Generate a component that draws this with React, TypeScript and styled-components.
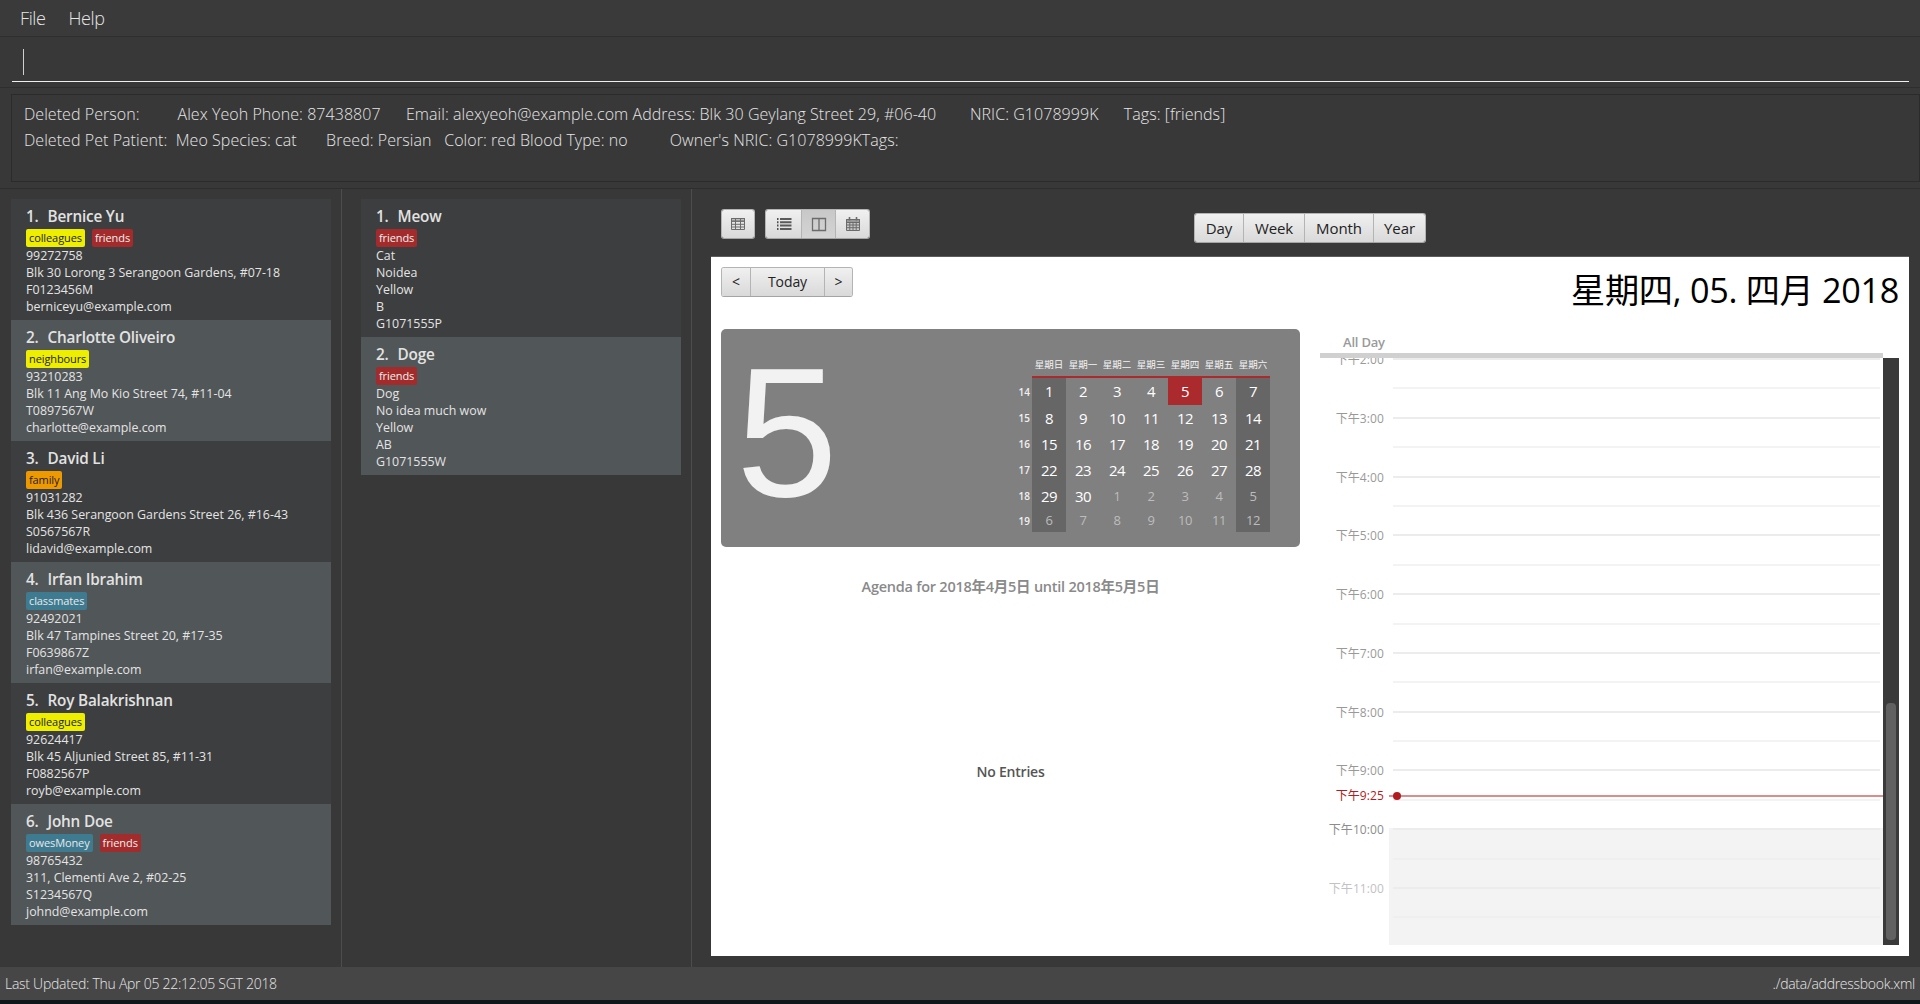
import React from "react";
import styled, { createGlobalStyle } from "styled-components";

const sans = `"Open Sans", "Noto Sans CJK SC", sans-serif`;

const GlobalStyle = createGlobalStyle`
  html, body { margin: 0; padding: 0; height: 100%; background: #383838; }
  #root { height: 100%; }
  * { box-sizing: border-box; }
`;

const Page = styled.div`
  height: 1004px;
  display: flex;
  flex-direction: column;
  overflow: hidden;
  background: #383838;
  font-family: ${sans};
  color: #e6e6e6;
`;

const MenuBar = styled.div`
  height: 36px;
  flex: none;
  display: flex;
  align-items: center;
  gap: 23px;
  padding: 0 0 1px 20px;
  background: #3a3a3a;
  font-size: 18px;
  font-weight: 300;
  letter-spacing: -0.4px;
`;

const CommandBox = styled.div`
  height: 52px;
  flex: none;
  padding: 12px 11px 0 12px;
  border-top: 1px solid #2e2e2e;
  border-bottom: 1px solid #2e2e2e;
`;

const CommandInput = styled.div`
  height: 33px;
  padding: 0 0 6px 11px;
  border-bottom: 1px solid #f0f0f0;
`;

const Caret = styled.div`
  width: 1px;
  height: 26px;
  background: #d0d0d0;
`;

const ResultOuter = styled.div`
  height: 101px;
  flex: none;
  padding: 6px 0 6px 11px;
  border-bottom: 1px solid #2e2e2e;
`;

const ResultBox = styled.div`
  height: 100%;
  padding: 6px 12px;
  border: 1px solid #2b2b2b;
  font-size: 16px;
  font-weight: 300;
  letter-spacing: 0.055px;
  line-height: 26px;
  white-space: pre;
`;

const Main = styled.div`
  flex: 1;
  min-height: 0;
  display: flex;
`;

const ListColumn = styled.div<{ $width: number; $left: number }>`
  width: ${(p) => p.$width}px;
  flex: none;
  padding: 10px 10px 0 ${(p) => p.$left}px;
  border-right: 1px solid #4d4d4d;
`;

const Card = styled.div<{ $even: boolean }>`
  padding: 8px 0 5px 15px;
  background: ${(p) => (p.$even ? "#515658" : "#3c3e3f")};
  color: #e4e4e4;
  font-size: 12.4px;
`;

const CardName = styled.div`
  height: 22px;
  display: flex;
  gap: 9px;
  font-size: 15.3px;
  line-height: 18px;
  font-weight: 600;
  letter-spacing: -0.2px;
  color: #e2e2e2;
`;

const TagRow = styled.div`
  display: flex;
  gap: 7px;
  height: 18px;
`;

const Tag = styled.span<{ $bg: string; $fg: string }>`
  height: 18px;
  padding: 0 3px;
  border-radius: 2px;
  font-size: 11px;
  letter-spacing: -0.1px;
  line-height: 18px;
  background: ${(p) => p.$bg};
  color: ${(p) => p.$fg};
`;

const CardLine = styled.div`
  height: 17px;
  line-height: 17px;
`;

const CalendarColumn = styled.div`
  flex: 1;
  min-width: 0;
  display: flex;
  flex-direction: column;
  padding: 0 11px 11px 19px;
`;

const Toolbar = styled.div`
  height: 67px;
  flex: none;
  display: grid;
  grid-template-columns: 1fr auto 1fr;
  padding-top: 20px;
`;

const ToolLeft = styled.div`
  display: flex;
  gap: 10px;
  align-items: flex-start;
  padding-left: 10px;
`;

const ButtonGroup = styled.div<{ $top?: number }>`
  display: flex;
  height: 30px;
  margin-top: ${(p) => p.$top ?? 0}px;
  border: 1px solid #b4b4b4;
  border-bottom-color: #a4a4a4;
  border-radius: 3px;
  overflow: hidden;
`;

const GroupButton = styled.div<{ $w: number; $pressed?: boolean; $size?: number }>`
  width: ${(p) => p.$w}px;
  display: flex;
  align-items: center;
  justify-content: center;
  padding-bottom: 1px;
  font-size: ${(p) => p.$size ?? 14}px;
  color: #222;
  letter-spacing: -0.1px;
  background: ${(p) =>
    p.$pressed
      ? "linear-gradient(#c8c8c8, #d4d4d4)"
      : "linear-gradient(#f0f0f0, #d9d9d9)"};
  & + & {
    border-left: 1px solid #b4b4b4;
  }
`;

const Sheet = styled.div`
  flex: 1;
  min-height: 0;
  display: flex;
  flex-direction: column;
  padding: 10px;
  background: #fff;
  border-top: 1px solid #5c5c5c;
  color: #000;
`;

const SheetHead = styled.div`
  height: 62px;
  flex: none;
  display: flex;
  justify-content: space-between;
  align-items: flex-start;
`;

const DateTitle = styled.div`
  font-size: 34.2px;
  line-height: 46px;
  letter-spacing: -0.3px;
  color: #000;
`;

const SheetBody = styled.div`
  flex: 1;
  min-height: 0;
  display: grid;
  grid-template-columns: 579px 579px;
  column-gap: 20px;
`;

const AgendaColumn = styled.div`
  display: flex;
  flex-direction: column;
  align-items: center;
`;

const MonthPanel = styled.div`
  width: 100%;
  height: 218px;
  flex: none;
  display: flex;
  justify-content: space-between;
  padding: 27px 30px 0 15px;
  border-radius: 5px;
  background: #808080;
`;

const BigDay = styled.div`
  font-family: "Liberation Sans", Arial, sans-serif;
  font-size: 183px;
  line-height: 153px;
  color: #f2f2f2;
`;

const MiniMonth = styled.div`
  display: grid;
  grid-template-columns: 22px repeat(7, 34px);
  grid-template-rows: 22px 27px 26px 26px 26px 26px 23px;
  color: #fff;
  font-size: 15px;
`;

const WeekdayHead = styled.div`
  display: flex;
  align-items: center;
  justify-content: center;
  padding-bottom: 4px;
  border-bottom: 2px solid #aa2a2e;
  font-size: 9.5px;
  color: #f4f4f4;
`;

const WeekNumber = styled.div`
  display: flex;
  align-items: center;
  justify-content: flex-end;
  padding-right: 2px;
  font-size: 10px;
  font-weight: 600;
  color: #f0f0f0;
`;

const DayCell = styled.div<{ $weekend: boolean; $today: boolean; $muted: boolean }>`
  display: flex;
  align-items: center;
  justify-content: center;
  padding-bottom: 1px;
  letter-spacing: -0.5px;
  font-size: ${(p) => (p.$muted ? 13 : 15)}px;
  background: ${(p) => (p.$today ? "#aa2a2e" : p.$weekend ? "#666" : "transparent")};
  color: ${(p) => (p.$muted ? "#bdbdbd" : "#fff")};
`;

const AgendaTitle = styled.div`
  margin-top: 30px;
  font-size: 14.5px;
  line-height: 20px;
  letter-spacing: -0.25px;
  font-weight: 600;
  color: #8a8a8a;
`;

const NoEntries = styled.div`
  flex: 1;
  display: flex;
  align-items: center;
  font-size: 14px;
  font-weight: 600;
  letter-spacing: -0.2px;
  color: #555;
`;

const DayColumn = styled.div`
  display: flex;
  flex-direction: column;
  padding-top: 4px;
  min-height: 0;
`;

const AllDayLabel = styled.div`
  height: 20px;
  padding-left: 23px;
  font-size: 13px;
  line-height: 18px;
  font-weight: 600;
  letter-spacing: -0.2px;
  color: #9a9a9a;
`;

const AllDayBar = styled.div`
  width: 563px;
  height: 5px;
  flex: none;
  background: #d0d0d0;
`;

const Scroller = styled.div`
  flex: 1;
  min-height: 0;
  display: flex;
  align-items: flex-start;
`;

const TimeGrid = styled.div`
  position: relative;
  width: 563px;
  height: 587px;
  overflow: hidden;
`;

const SlotRow = styled.div`
  height: 29.4px;
  display: grid;
  grid-template-columns: 69px 1fr;
`;

const SlotLabel = styled.div<{ $tone: string }>`
  height: 16px;
  padding-right: 5px;
  text-align: right;
  font-size: 12px;
  line-height: 16px;
  letter-spacing: 0.1px;
  color: ${(p) => p.$tone};
  transform: translateY(-6px);
`;

const SlotArea = styled.div<{ $off: boolean }>`
  padding: 0 3px 0 4px;
  background: ${(p) => (p.$off ? "#f3f3f3" : "transparent")};
`;

const SlotLine = styled.div<{ $hour: boolean; $off: boolean }>`
  height: 2px;
  background: ${(p) => (p.$hour ? "#ececec" : p.$off ? "#efefef" : "#f3f3f3")};
`;

const NowMarker = styled.div`
  position: absolute;
  left: 0;
  right: 0;
  top: 430px;
  height: 16px;
  display: grid;
  grid-template-columns: 69px 1fr;
  align-items: center;
  color: #b01c20;
`;

const NowLabel = styled.div`
  padding-right: 5px;
  text-align: right;
  font-size: 12px;
  line-height: 16px;
  letter-spacing: 0.1px;
`;

const NowLine = styled.div`
  position: relative;
  height: 2px;
  background: #dc8c8c;
  &::before {
    content: "";
    position: absolute;
    left: 4px;
    top: -3px;
    width: 8px;
    height: 8px;
    border-radius: 50%;
    background: #b01c20;
  }
`;

const ScrollTrack = styled.div`
  width: 16px;
  height: 587px;
  flex: none;
  padding: 345px 3px 5px 3px;
  background: #3a3a3a;
`;

const ScrollThumb = styled.div`
  height: 100%;
  border-radius: 4px;
  background: #616161;
`;

const StatusBar = styled.div`
  height: 33px;
  flex: none;
  display: flex;
  justify-content: space-between;
  align-items: center;
  padding: 0 5px;
  background: #464646;
  font-size: 14px;
  font-weight: 300;
  letter-spacing: -0.27px;
`;

const TaskStrip = styled.div`
  height: 4px;
  flex: none;
  background: #10171b;
`;

const glyph = { width: 18, height: 18, viewBox: "0 0 18 18", fill: "none", stroke: "#6b6b6b" };

const TableIcon = () => (
  <svg {...glyph} strokeWidth="1">
    <path d="M2.5 3.5h13v2.7h-13z" fill="#bdbdbd" />
    <path d="M2.5 3.5h13v11h-13zM2.5 6.2h13M2.5 9.3h13M2.5 12h13M6.5 3.5v11M11.5 3.5v11" />
  </svg>
);

const ListIcon = () => (
  <svg {...glyph} strokeWidth="2">
    <path d="M2 4h1.5M2 7.3h1.5M2 10.6h1.5M2 14h1.5" stroke="#4f4f4f" />
    <path d="M5 4h11.5M5 7.3h11.5M5 10.6h11.5M5 14h11.5" stroke="#5a5a5a" />
  </svg>
);

const SplitIcon = () => (
  <svg {...glyph} strokeWidth="1.3">
    <path d="M2.5 3.5h13v12h-13zM9 3.5v12" />
  </svg>
);

const CalendarIcon = () => (
  <svg {...glyph} strokeWidth="1">
    <path d="M2.5 4.5h13v11h-13z" fill="#c8c8c8" />
    <path d="M2.5 4.5h13v3h-13z" fill="#9a9a9a" />
    <path d="M2.5 10h13M2.5 12.7h13M5.8 7.5v8M9 7.5v8M12.2 7.5v8" />
    <path d="M5.5 2v3.5M12.5 2v3.5" strokeWidth="1.6" />
  </svg>
);

const YELLOW = { $bg: "#eeee00", $fg: "#222" };
const RED = { $bg: "#a32b2b", $fg: "#f0f0f0" };
const ORANGE = { $bg: "#ee9900", $fg: "#222" };
const TEAL = { $bg: "#3e7b91", $fg: "#e8e8e8" };

const tagStyle: Record<string, { $bg: string; $fg: string }> = {
  colleagues: YELLOW,
  neighbours: YELLOW,
  friends: RED,
  family: ORANGE,
  classmates: TEAL,
  owesMoney: TEAL,
};

const persons = [
  { name: "Bernice Yu", tags: ["colleagues", "friends"], lines: ["99272758", "Blk 30 Lorong 3 Serangoon Gardens, #07-18", "F0123456M", "berniceyu@example.com"] },
  { name: "Charlotte Oliveiro", tags: ["neighbours"], lines: ["93210283", "Blk 11 Ang Mo Kio Street 74, #11-04", "T0897567W", "charlotte@example.com"] },
  { name: "David Li", tags: ["family"], lines: ["91031282", "Blk 436 Serangoon Gardens Street 26, #16-43", "S0567567R", "lidavid@example.com"] },
  { name: "Irfan Ibrahim", tags: ["classmates"], lines: ["92492021", "Blk 47 Tampines Street 20, #17-35", "F0639867Z", "irfan@example.com"] },
  { name: "Roy Balakrishnan", tags: ["colleagues"], lines: ["92624417", "Blk 45 Aljunied Street 85, #11-31", "F0882567P", "royb@example.com"] },
  { name: "John Doe", tags: ["owesMoney", "friends"], lines: ["98765432", "311, Clementi Ave 2, #02-25", "S1234567Q", "johnd@example.com"] },
];

const pets = [
  { name: "Meow", tags: ["friends"], lines: ["Cat", "Noidea", "Yellow", "B", "G1071555P"] },
  { name: "Doge", tags: ["friends"], lines: ["Dog", "No idea much wow", "Yellow", "AB", "G1071555W"] },
];

const weekdays = ["星期日", "星期一", "星期二", "星期三", "星期四", "星期五", "星期六"];
const weeks: [number, number[]][] = [
  [14, [1, 2, 3, 4, 5, 6, 7]],
  [15, [8, 9, 10, 11, 12, 13, 14]],
  [16, [15, 16, 17, 18, 19, 20, 21]],
  [17, [22, 23, 24, 25, 26, 27, 28]],
  [18, [29, 30, 1, 2, 3, 4, 5]],
  [19, [6, 7, 8, 9, 10, 11, 12]],
];

const slots = Array.from({ length: 20 }, (_, i) => i);

function labelTone(hour: number) {
  if (hour === 11) return "#c2c2c2";
  if (hour === 10) return "#8c8c8c";
  return "#999";
}

function EntryCard(props: { index: number; name: string; tags: string[]; lines: string[] }) {
  return (
    <Card $even={props.index % 2 === 1}>
      <CardName>
        <span>{props.index + 1}.</span>
        <span>{props.name}</span>
      </CardName>
      <TagRow>
        {props.tags.map((t) => (
          <Tag key={t} {...tagStyle[t]}>
            {t}
          </Tag>
        ))}
      </TagRow>
      {props.lines.map((l, i) => (
        <CardLine key={i}>{l}</CardLine>
      ))}
    </Card>
  );
}

export default function App() {
  return (
    <Page>
      <GlobalStyle />
      <MenuBar>
        <span>File</span>
        <span>Help</span>
      </MenuBar>
      <CommandBox>
        <CommandInput>
          <Caret />
        </CommandInput>
      </CommandBox>
      <ResultOuter>
        <ResultBox>
          {"Deleted Person:         Alex Yeoh Phone: 87438807      Email: alexyeoh@example.com Address: Blk 30 Geylang Street 29, #06-40        NRIC: G1078999K      Tags: [friends]\n"}
          {"Deleted Pet Patient:  Meo Species: cat       Breed: Persian   Color: red Blood Type: no          Owner's NRIC: G1078999KTags:"}
        </ResultBox>
      </ResultOuter>
      <Main>
        <ListColumn $width={342} $left={11}>
          {persons.map((p, i) => (
            <EntryCard key={p.name} index={i} {...p} />
          ))}
        </ListColumn>
        <ListColumn $width={350} $left={19}>
          {pets.map((p, i) => (
            <EntryCard key={p.name} index={i} {...p} />
          ))}
        </ListColumn>
        <CalendarColumn>
          <Toolbar>
            <ToolLeft>
              <ButtonGroup>
                <GroupButton $w={32}>
                  <TableIcon />
                </GroupButton>
              </ButtonGroup>
              <ButtonGroup>
                <GroupButton $w={35}>
                  <ListIcon />
                </GroupButton>
                <GroupButton $w={34} $pressed>
                  <SplitIcon />
                </GroupButton>
                <GroupButton $w={34}>
                  <CalendarIcon />
                </GroupButton>
              </ButtonGroup>
            </ToolLeft>
            <ButtonGroup $top={4}>
              <GroupButton $w={48} $size={15}>Day</GroupButton>
              <GroupButton $w={61} $size={15}>Week</GroupButton>
              <GroupButton $w={69} $size={15}>Month</GroupButton>
              <GroupButton $w={52} $size={15}>Year</GroupButton>
            </ButtonGroup>
            <div />
          </Toolbar>
          <Sheet>
            <SheetHead>
              <ButtonGroup>
                <GroupButton $w={28}>&lt;</GroupButton>
                <GroupButton $w={74}>Today</GroupButton>
                <GroupButton $w={28}>&gt;</GroupButton>
              </ButtonGroup>
              <DateTitle>星期四, 05. 四月 2018</DateTitle>
            </SheetHead>
            <SheetBody>
              <AgendaColumn>
                <MonthPanel>
                  <BigDay>5</BigDay>
                  <MiniMonth>
                    <div />
                    {weekdays.map((d) => (
                      <WeekdayHead key={d}>{d}</WeekdayHead>
                    ))}
                    {weeks.map(([week, days], w) => (
                      <React.Fragment key={week}>
                        <WeekNumber>{week}</WeekNumber>
                        {days.map((d, i) => (
                          <DayCell
                            key={i}
                            $weekend={i === 0 || i === 6}
                            $today={w === 0 && i === 4}
                            $muted={(w === 4 && i > 1) || w === 5}
                          >
                            {d}
                          </DayCell>
                        ))}
                      </React.Fragment>
                    ))}
                  </MiniMonth>
                </MonthPanel>
                <AgendaTitle>Agenda for 2018年4月5日 until 2018年5月5日</AgendaTitle>
                <NoEntries>No Entries</NoEntries>
              </AgendaColumn>
              <DayColumn>
                <AllDayLabel>All Day</AllDayLabel>
                <AllDayBar />
                <Scroller>
                  <TimeGrid>
                    {slots.map((s) => {
                      const hour = 2 + Math.floor(s / 2);
                      const onHour = s % 2 === 0;
                      return (
                        <SlotRow key={s}>
                          <SlotLabel $tone={labelTone(hour)}>{onHour ? `下午${hour}:00` : ""}</SlotLabel>
                          <SlotArea $off={s >= 16}>
                            <SlotLine $hour={onHour} $off={s >= 16} />
                          </SlotArea>
                        </SlotRow>
                      );
                    })}
                    <NowMarker>
                      <NowLabel>下午9:25</NowLabel>
                      <NowLine />
                    </NowMarker>
                  </TimeGrid>
                  <ScrollTrack>
                    <ScrollThumb />
                  </ScrollTrack>
                </Scroller>
              </DayColumn>
            </SheetBody>
          </Sheet>
        </CalendarColumn>
      </Main>
      <StatusBar>
        <span>Last Updated: Thu Apr 05 22:12:05 SGT 2018</span>
        <span>./data/addressbook.xml</span>
      </StatusBar>
      <TaskStrip />
    </Page>
  );
}
